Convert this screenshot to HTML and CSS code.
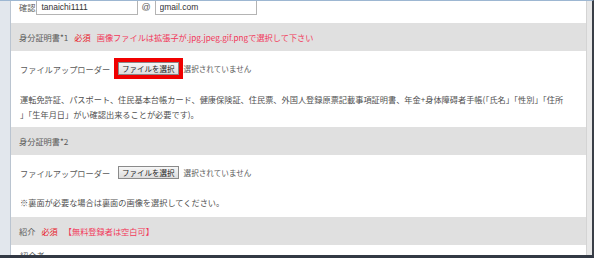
FILE: index.html
```html
<!DOCTYPE html>
<html lang="ja">
	<head>
		<title>登録</title>
		<meta charset="utf-8">
		<link rel="stylesheet" href="styles.css">
	</head>
	<body>
		<div class="window">
			<div class="side"></div>
			<div class="content">
				<div class="mail-row">
					<span class="label">確認</span>
					<input class="mail" type="text" value="tanaichi1111">
					<span class="at">@</span>
					<input class="mail" type="text" value="gmail.com">
				</div>

				<div class="band">
					<span>身分証明書*1</span>
					<span class="req">必須</span>
					<span class="msg">画像ファイルは拡張子が.jpg.jpeg.gif.pngで選択して下さい</span>
				</div>
				<div class="upload">
					<span>ファイルアップローダー</span>
					<span class="file-btn marked">ファイルを選択</span>
					<span class="status">選択されていません</span>
				</div>
				<p class="note first">運転免許証、パスポート、住民基本台帳カード、健康保険証、住民票、外国人登録原票記載事項証明書、年金+身体障碍者手帳(「氏名」「性別」「住所<br>」「生年月日」がい確認出来ることが必要です)。</p>

				<div class="band">
					<span>身分証明書*2</span>
				</div>
				<div class="upload">
					<span>ファイルアップローダー</span>
					<span class="file-btn">ファイルを選択</span>
					<span class="status">選択されていません</span>
				</div>
				<p class="note">※裏面が必要な場合は裏面の画像を選択してください。</p>

				<div class="band">
					<span>紹介</span>
					<span class="req">必須</span>
					<span class="msg">【無料登録者は空白可】</span>
				</div>
				<div class="last-row">紹介者</div>
			</div>
			<div class="scroll"></div>
		</div>
	</body>
</html>
```

FILE: styles.css
```css
* {
	box-sizing: border-box;
}

body {
	margin: 0px;
	background-color: #ffffff;
	font-family: "Noto Sans CJK JP", sans-serif;
	font-size: 8.2px;
	color: #5a5a5a;
}

.window {
	display: flex;
	height: 258px;
	border-top: 1px solid #9db7d2;
	border-bottom: 3px solid #323944;
	border-right: 2px solid #3a3f47;
}

.side {
	width: 11px;
	background-color: #e2e7ed;
	border-right: 1px solid #bac4d0;
}

.content {
	flex: 1;
	display: flex;
	flex-direction: column;
	overflow: hidden;
}

.scroll {
	width: 6px;
	background-color: #e8e8e8;
	border-left: 1px solid #d4d4d4;
}

/* mail address row (cut at the top) */
.mail-row {
	flex: none;
	height: 22px;
	display: flex;
	align-items: flex-end;
	padding: 0px 9px 8px 8px;
}

.mail-row .label {
	line-height: 16px;
}

.mail {
	width: 102px;
	height: 16px;
	margin-left: 1px;
	padding: 0px 4px;
	border: 1px solid #b4b4b4;
	font-family: "Liberation Sans", sans-serif;
	font-size: 8.5px;
	color: #333333;
}

.at {
	margin: 0px 3px;
	line-height: 16px;
	font-family: "Liberation Sans", sans-serif;
	font-size: 9px;
}

.band {
	flex: none;
	height: 28px;
	display: flex;
	align-items: center;
	gap: 6px;
	padding-left: 8px;
	background-color: #e0e0e0;
}

.req {
	color: #e8202a;
}

.msg {
	color: #f2385a;
}

.upload {
	flex: none;
	display: flex;
	align-items: center;
	padding: 11px 9px 0px 9px;
}

.file-btn {
	height: 13px;
	margin-left: 8px;
	padding: 0px 3px;
	line-height: 11px;
	border: 1px solid #8a8a8a;
	background: linear-gradient(#f6f6f6, #dddddd);
	font-size: 7.5px;
	color: #222222;
}

.file-btn.marked {
	outline: 4px solid #f00000;
}

.status {
	margin-left: 5px;
	font-size: 7.6px;
}

.note {
	flex: none;
	margin: 16px 0px 0px 0px;
	padding: 0px 4px 7px 9px;
	line-height: 15px;
	color: #505050;
}

.note.first {
	margin-top: 17px;
	padding-bottom: 5px;
}

.last-row {
	padding: 3px 9px 0px 9px;
	line-height: 15px;
}
```
